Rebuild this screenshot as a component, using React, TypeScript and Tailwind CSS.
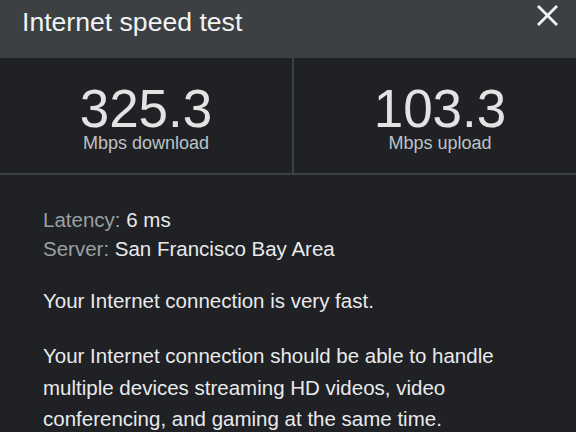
export default function App() {
  return (
    <div className="w-[576px] h-[432px] overflow-hidden bg-[#202124] font-['Liberation_Sans',Arial,sans-serif]">
      <div className="w-[586px]">
        <div className="h-[58px] bg-[#3c4043] flex justify-between items-start pl-[22px] pr-[28px]">
          <span className="text-[26.6px] leading-[30px] pt-[7px] text-[#f1f3f4]">
            Internet speed test
          </span>
          <svg width="21" height="21" viewBox="0 0 21 21" className="mt-[5px]">
            <path
              d="M2 2 L19 19 M19 2 L2 19"
              stroke="#f1f3f4"
              strokeWidth="2.8"
              strokeLinecap="square"
            />
          </svg>
        </div>
        <div className="flex h-[117px] border-b-2 border-[#3c4043]">
          <div className="w-[292px] flex flex-col items-center pt-[26px]">
            <span className="text-[53px] leading-[49px] text-[#e3e3e3]">325.3</span>
            <span className="mt-[1px] text-[18px] leading-[18px] text-[#bdc1c6]">Mbps download</span>
          </div>
          <div className="w-[2px] bg-[#3c4043]" />
          <div className="flex-1 flex flex-col items-center pt-[26px]">
            <span className="text-[53px] leading-[49px] text-[#e3e3e3]">103.3</span>
            <span className="mt-[1px] text-[18px] leading-[18px] text-[#bdc1c6]">Mbps upload</span>
          </div>
        </div>
        <div className="px-[43px] pt-[30px] text-[20.5px] text-[#e8eaed]">
          <div className="leading-[29px]">
            <span className="text-[#9aa0a6]">Latency: </span>6 ms
          </div>
          <div className="leading-[29px]">
            <span className="text-[#9aa0a6]">Server: </span>San Francisco Bay Area
          </div>
          <p className="mt-[22px] leading-[31px]">Your Internet connection is very fast.</p>
          <p className="mt-[24px] leading-[31.5px]">
            Your Internet connection should be able to handle multiple devices streaming HD
            videos, video conferencing, and gaming at the same time.
          </p>
        </div>
      </div>
    </div>
  );
}
